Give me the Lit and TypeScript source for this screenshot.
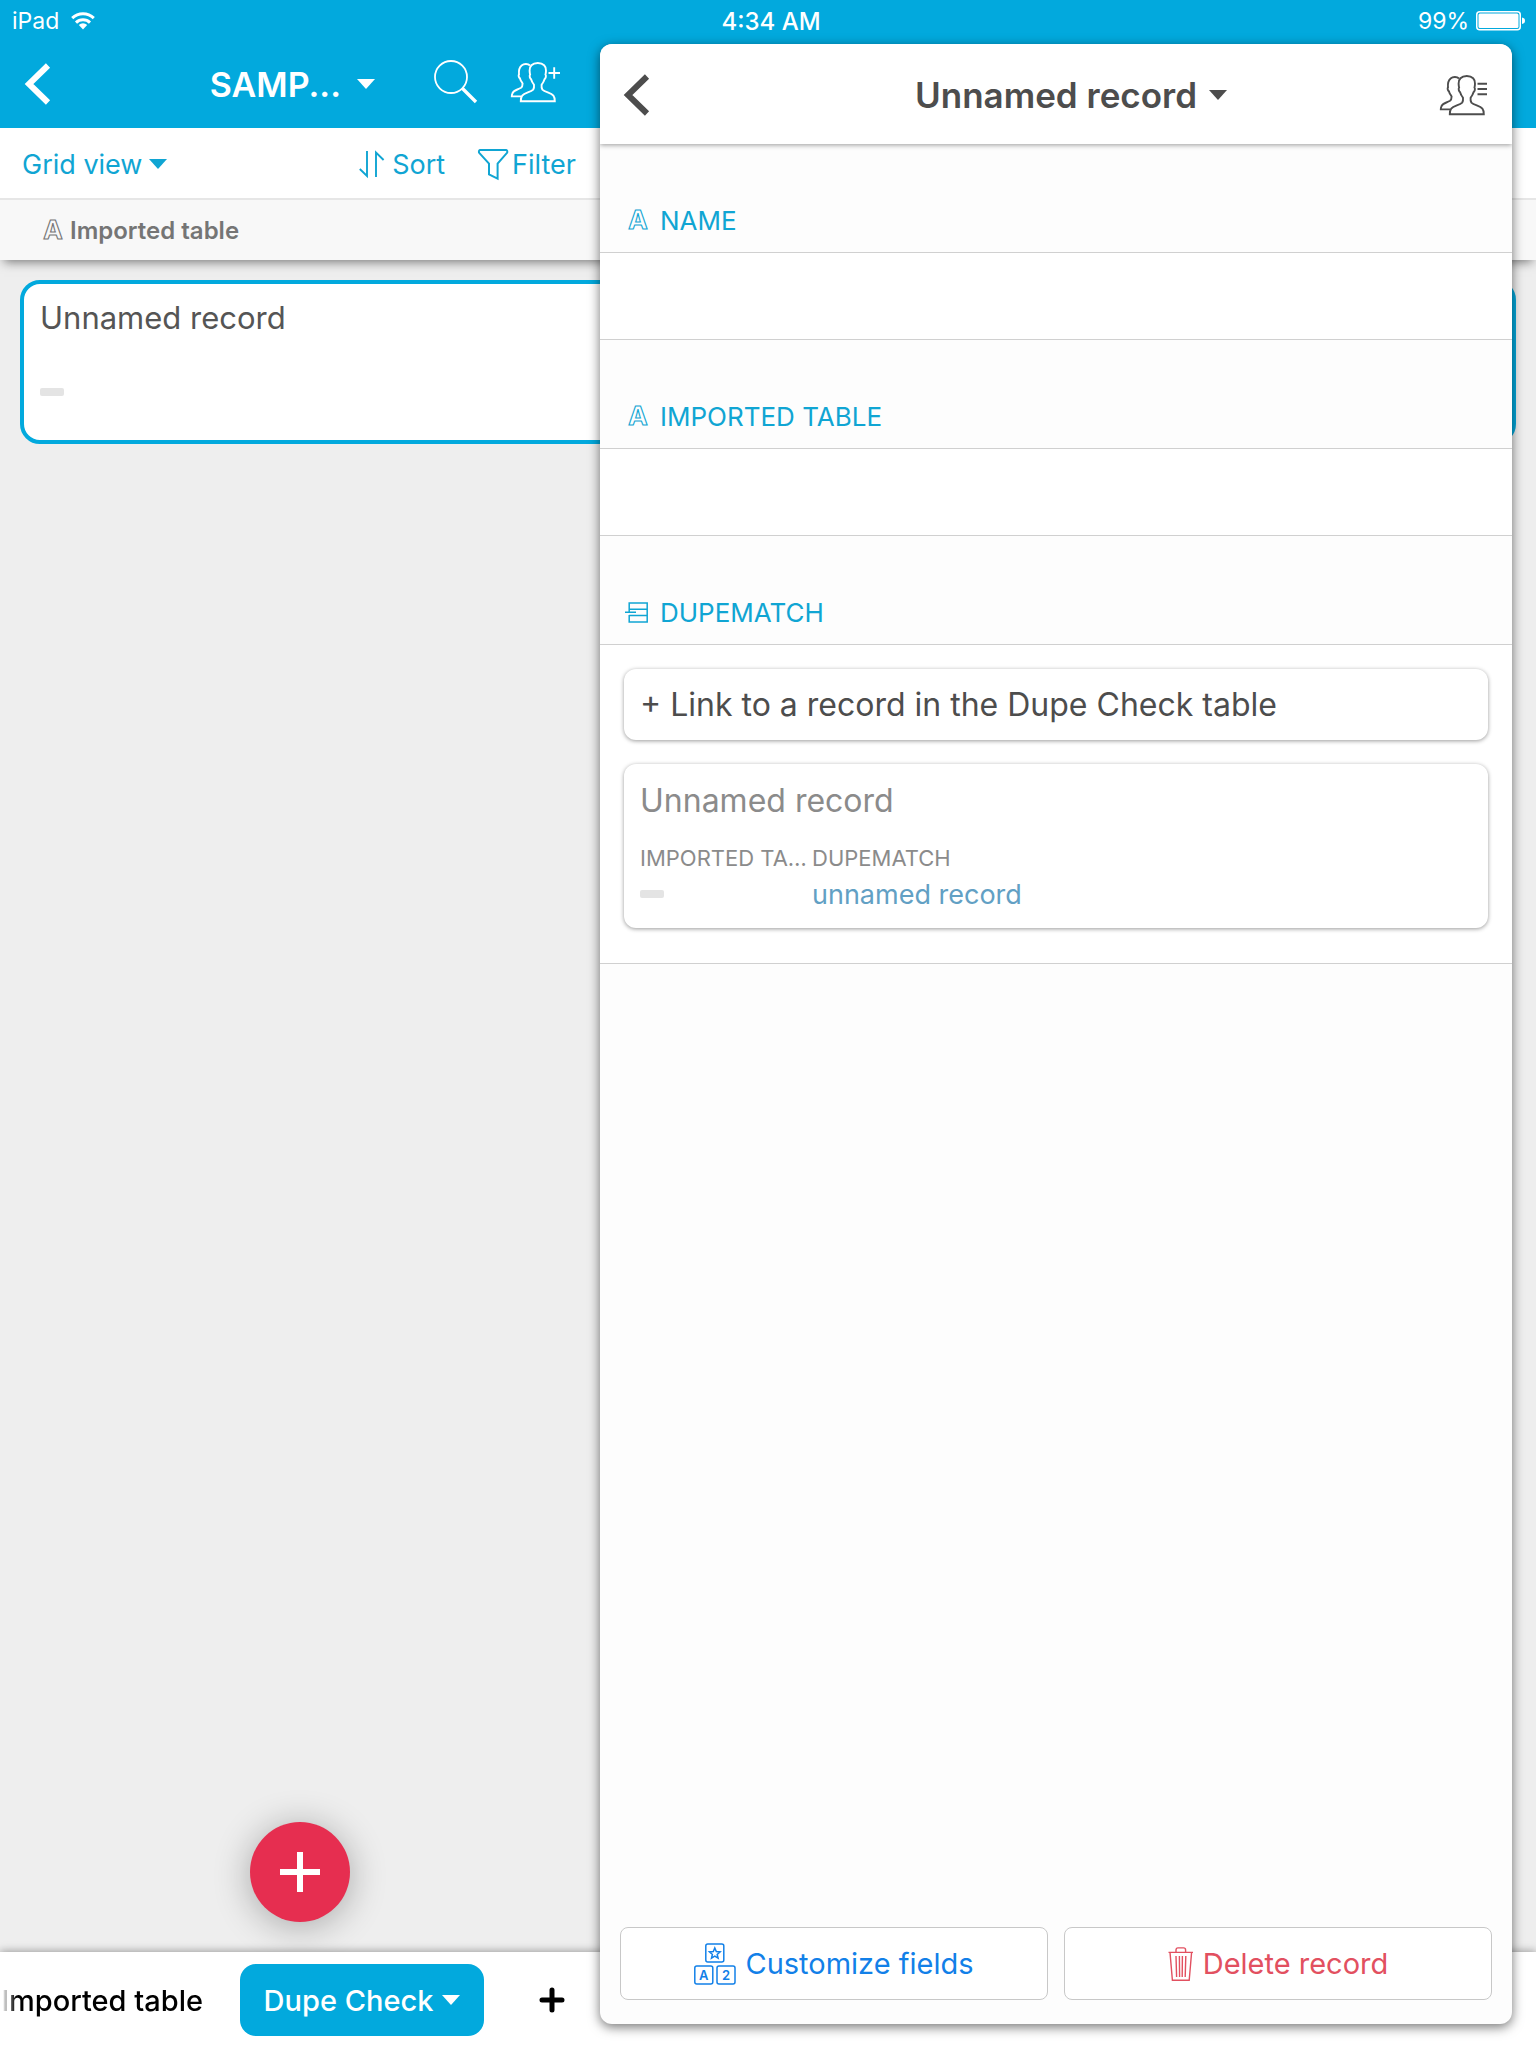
import { LitElement, html, css, svg, nothing } from "lit";
import { customElement, property } from "lit/decorators.js";

const personPair = svg`
  <path d="M19 3.5 C17 1.6 13 1.4 10.6 3.4 C8 5.6 7.6 8.4 8 12.4 C7.2 13.4 7.8 15.6 9 16.4 C9.6 18.6 10.8 20 11.6 21.4 C11.6 23.4 11.6 24.6 10 25.8 C6.6 28 2.6 27.8 1.4 31.4 C1 32.4 .8 33.4 .8 34.4 H10"/>
  <path d="M26.8 1 C21 1 18.4 4.4 18.6 8.6 C18.7 10.4 18.8 11.6 19.1 12.6 C18.2 13.6 18.8 16.6 20.2 17.4 C20.8 19.6 22 21.4 23 22.8 C23.2 24.6 23.2 26.2 22.2 27.6 C19.4 30.4 13.6 30.6 11.2 33.6 C9.8 35.4 9.8 37.4 9.8 39.2 H43.8 C43.8 37.4 43.8 35.4 42.4 33.6 C40 30.6 34.2 30.4 31.4 27.6 C30.4 26.2 30.4 24.6 30.6 22.8 C31.6 21.4 32.8 19.6 33.4 17.4 C34.8 16.6 35.4 13.6 34.5 12.6 C34.8 11.6 34.9 10.4 35 8.6 C35.2 4.4 32.6 1 26.8 1 Z"/>`;

const icons = {
  wifi: { w: 24, h: 18, body: svg`<g fill="none" stroke="currentColor" stroke-width="3"><path d="M1.2 6.2 A15.6 15.6 0 0 1 22.8 6.2"/><path d="M5 10.6 A10 10 0 0 1 19 10.6"/></g><path fill="currentColor" d="M7.8 13 A6 6 0 0 1 16.2 13 L12 17.6 Z"/>` },
  battery: { w: 50, h: 20, body: svg`<rect x=".75" y=".75" width="43.5" height="18" rx="3" fill="none" stroke="currentColor" stroke-width="1.5"/><rect x="2.5" y="2.5" width="40" height="14.5" rx="1.5" fill="currentColor"/><path fill="currentColor" d="M46 6.5 Q49 7 49 9.75 Q49 12.5 46 13 Z"/>` },
  back: { w: 26, h: 42, body: svg`<path d="M23 2.5 L4 21 L23 39.5" fill="none" stroke="currentColor" stroke-width="6"/>` },
  caret: { w: 18, h: 10, body: svg`<path d="M0 0 H18 L9 10 Z" fill="currentColor"/>` },
  search: { w: 44, h: 44, body: svg`<circle cx="17" cy="17" r="16" fill="none" stroke="currentColor" stroke-width="1.8"/><path d="M28.5 28.5 L42 42" stroke="currentColor" stroke-width="3.4"/>` },
  invite: { w: 50, h: 40, body: svg`<g fill="none" stroke="currentColor" stroke-width="1.9">${personPair}<path d="M37.5 11 H49 M43.2 5.2 V16.8"/></g>` },
  members: { w: 48, h: 40, body: svg`<g fill="none" stroke="currentColor" stroke-width="1.9">${personPair}<path d="M37.5 8.8 H47 M37.5 14 H47 M37.5 19.2 H47"/></g>` },
  sort: { w: 26, h: 28, body: svg`<path d="M8 1 V26 L.8 19 M17 27 V2.5 L24.6 10" fill="none" stroke="currentColor" stroke-width="1.9"/>` },
  filter: { w: 30, h: 31, body: svg`<path d="M2 1 H28.2 Q29.6 1.2 29.2 3.6 L19.6 14.6 V29.6 L11 25.4 V14.6 L1 3.6 Q.6 1.2 2 1 Z" fill="none" stroke="currentColor" stroke-width="2"/>` },
  text: { w: 24, h: 24, body: svg`<text x="14" y="21" font-family="Inter, sans-serif" font-size="26" font-weight="700" text-anchor="middle" fill="none" stroke="currentColor" stroke-width="1.1">A</text>` },
  link: { w: 24, h: 24, body: svg`<path d="M5.2 12.2 V3 H23.2 V22 H5.2 V15 M5.2 9.2 H23.2 M5.2 15.6 H23.2 M1 12.2 H12" fill="none" stroke="currentColor" stroke-width="1.5"/>` },
  blocks: { w: 42, h: 42, body: svg`<g fill="none" stroke="currentColor" stroke-width="1.5"><rect x="11.8" y="1" width="18" height="18" rx="2"/><rect x=".8" y="23" width="18" height="18" rx="2"/><rect x="23" y="23" width="18" height="18" rx="2"/><path d="M20.8 5 L22.3 8.6 L26.1 8.9 L23.2 11.4 L24.1 15.1 L20.8 13.1 L17.5 15.1 L18.4 11.4 L15.5 8.9 L19.3 8.6 Z"/></g><g fill="currentColor" font-family="Inter, sans-serif" font-size="13" font-weight="600" text-anchor="middle"><text x="9.8" y="36.8">A</text><text x="32" y="36.8">2</text></g>` },
  trash: { w: 26, h: 34, body: svg`<path d="M.5 5.4 H25 M8 5.4 V3 Q8 .9 10 .9 H15.6 Q17.6 .9 17.6 3 V5.4 M2 5.4 L4.4 33.2 H21.2 L23.6 5.4 M8 9 L8.6 30 M11.4 9 L11.6 30 M14.4 9 L14.2 30 M17.8 9 L17.2 30" fill="none" stroke="currentColor" stroke-width="1.4"/>` },
  plus: { w: 40, h: 40, body: svg`<path d="M0 20 H40 M20 0 V40" stroke="currentColor" stroke-width="6"/>` },
  plusSmall: { w: 24, h: 24, body: svg`<path d="M2 12 H22 M12 2 V22" stroke="currentColor" stroke-width="5" stroke-linecap="round"/>` },
};
type IconName = keyof typeof icons;

const icon = (name: IconName) => {
  const { w, h, body } = icons[name];
  return html`<svg class="icon" width=${w} height=${h} viewBox="0 0 ${w} ${h}" aria-hidden="true">${body}</svg>`;
};

const base = css`
  *, *::before, *::after { box-sizing: border-box; }
  button, input {
    font: inherit;
    color: inherit;
    margin: 0;
    padding: 0;
    border: 0;
    background: none;
  }
  button { display: flex; align-items: center; cursor: pointer; white-space: nowrap; }
  .icon { display: block; flex: none; overflow: visible; }
  .dash { width: 24px; height: 8px; border-radius: 2px; background: #e4e4e4; }
`;

@customElement("field-section")
class FieldSection extends LitElement {
  @property() label = "";
  @property() icon: IconName = "text";
  @property({ type: Boolean }) editable = false;

  static styles = [base, css`
    :host { display: block; }
    .head {
      display: flex;
      align-items: flex-end;
      gap: 12px;
      height: 109px;
      padding: 0 24px 15px;
      border-bottom: 1px solid #d0d0d0;
      background: #fdfdfd;
      color: #10a5d3;
      font-size: 26px;
      line-height: 32px;
      text-transform: uppercase;
    }
    .head .icon { margin-bottom: 5px; }
    .body { border-bottom: 1px solid #d0d0d0; background: #fff; }
    .value { display: block; width: 100%; height: 86px; padding: 0 42px; font-size: 32px; outline: none; }
  `];

  render() {
    return html`
      <div class="head">${icon(this.icon)}<label for=${this.editable ? "value" : nothing}>${this.label}</label></div>
      <div class="body">
        ${this.editable ? html`<input class="value" id="value" type="text">` : html`<slot></slot>`}
      </div>`;
  }
}

@customElement("record-panel")
class RecordPanel extends LitElement {
  static styles = [base, css`
    :host {
      display: flex;
      flex-direction: column;
      overflow: hidden;
      border-radius: 12px;
      background: #fdfdfd;
      box-shadow: 0 3px 12px rgba(0, 0, 0, .55);
      color: #4d4d4d;
    }
    .header {
      display: grid;
      grid-template-columns: 1fr auto 1fr;
      align-items: center;
      height: 100px;
      padding: 2px 24px 0;
      background: #fff;
      box-shadow: 0 1px 5px rgba(0, 0, 0, .4);
      z-index: 1;
    }
    .title { gap: 12px; padding-left: 30px; font-size: 35px; line-height: 44px; font-weight: 600; }
    .members { justify-self: end; }
    .links { display: flex; flex-direction: column; gap: 24px; padding: 24px 24px 35px; }
    .card {
      border-radius: 12px;
      background: #fff;
      box-shadow: 0 1px 4px rgba(0, 0, 0, .4);
      padding: 0 16px;
    }
    .add { height: 71px; width: 100%; font-size: 32px; }
    .linked { height: 164px; padding-top: 15px; color: #8b8b8b; }
    .name { font-size: 32px; line-height: 44px; }
    .cells { display: grid; grid-template-columns: 168px 1fr; column-gap: 4px; margin-top: 19px; }
    .cell { min-width: 0; }
    .caption { font-size: 22px; line-height: 32px; text-transform: uppercase; overflow: hidden; text-overflow: ellipsis; white-space: nowrap; }
    .cell-value { display: flex; align-items: center; height: 40px; font-size: 27px; }
    .cell-value a { color: #62a0c4; text-decoration: none; }
    .actions { display: grid; grid-template-columns: 1fr 1fr; gap: 16px; margin-top: auto; padding: 0 20px 24px; }
    .action {
      justify-content: center;
      gap: 9px;
      height: 73px;
      border: 1px solid #c8c8c8;
      border-radius: 8px;
      background: #fff;
      font-size: 29px;
      color: #1280e8;
    }
    .danger { color: #e25060; }
  `];

  render() {
    return html`
      <header class="header">
        <button aria-label="Back">${icon("back")}</button>
        <button class="title">Unnamed record ${icon("caret")}</button>
        <button class="members" aria-label="Members">${icon("members")}</button>
      </header>
      <field-section label="Name" editable></field-section>
      <field-section label="Imported table" editable></field-section>
      <field-section label="Dupematch" icon="link">
        <div class="links">
          <button class="card add">+ Link to a record in the Dupe Check table</button>
          <article class="card linked">
            <div class="name">Unnamed record</div>
            <div class="cells">
              <div class="cell">
                <div class="caption">Imported table</div>
                <div class="cell-value"><span class="dash"></span></div>
              </div>
              <div class="cell">
                <div class="caption">Dupematch</div>
                <div class="cell-value"><a href="#record">unnamed record</a></div>
              </div>
            </div>
          </article>
        </div>
      </field-section>
      <footer class="actions">
        <button class="action">${icon("blocks")}Customize fields</button>
        <button class="action danger">${icon("trash")}Delete record</button>
      </footer>`;
  }
}

@customElement("app-root")
class AppRoot extends LitElement {
  static styles = [base, css`
    :host {
      --brand: #02a9dd;
      --master: 600px;
      display: flex;
      flex-direction: column;
      position: relative;
      min-height: 100vh;
      overflow: hidden;
      background: #eee;
      font-family: Inter, "Liberation Sans", sans-serif;
    }
    .status {
      display: grid;
      grid-template-columns: 1fr auto 1fr;
      align-items: center;
      height: 44px;
      padding: 0 10px 2px 12px;
      background: var(--brand);
      color: #fff;
      font-size: 23px;
    }
    .device { display: flex; align-items: center; gap: 12px; }
    .clock { padding-left: 4px; font-size: 24px; font-weight: 500; }
    .power { display: flex; align-items: center; justify-content: flex-end; gap: 7px; }
    .topbar { height: 84px; background: var(--brand); color: #fff; }
    .nav {
      display: flex;
      align-items: center;
      width: var(--master);
      height: 80px;
      padding: 0 39px 0 25px;
    }
    .title { gap: 16px; margin: 0 59px 0 auto; font-size: 34px; font-weight: 600; }
    .tools { display: flex; align-items: center; gap: 33px; padding-bottom: 4px; }
    .toolbar {
      position: relative;
      z-index: 1;
      height: 72px;
      background: #fff;
      border-bottom: 2px solid #e6e6e6;
      color: #10a5d3;
      font-size: 27px;
    }
    .views {
      display: flex;
      align-items: center;
      width: var(--master);
      height: 100%;
      padding: 2px 24px 0 22px;
    }
    .view { gap: 7px; margin-right: auto; }
    .views .tool { gap: 7px; margin-left: 33px; }
    .views .filter { gap: 4px; }
    .columns {
      display: flex;
      align-items: center;
      gap: 7px;
      height: 60px;
      padding: 0 39px;
      background: #f8f8f8;
      box-shadow: 0 6px 10px -4px rgba(0, 0, 0, .5);
      color: #757575;
      font-size: 24px;
      font-weight: 600;
    }
    .content { position: relative; flex: 1; padding: 20px; }
    .record {
      height: 164px;
      border: 4px solid var(--brand);
      border-radius: 20px;
      background: #fff;
      padding: 12px 16px;
      color: #555;
      font-size: 31px;
      line-height: 44px;
    }
    .record .dash { margin-top: 48px; }
    .add {
      position: absolute;
      left: calc(var(--master) / 2 - 50px);
      bottom: 30px;
      justify-content: center;
      width: 100px;
      height: 100px;
      border-radius: 50%;
      background: #e62e50;
      color: #fff;
      box-shadow: 0 4px 36px rgba(0, 0, 0, .3);
    }
    .tabs {
      display: flex;
      align-items: center;
      height: 96px;
      background: #fff;
      box-shadow: 0 -1px 8px rgba(0, 0, 0, .35);
      z-index: 1;
      font-size: 29px;
      font-weight: 500;
    }
    .scrolled {
      justify-content: flex-end;
      width: 240px;
      padding-right: 37px;
      overflow: hidden;
      mask-image: linear-gradient(to right, transparent 2px, #000 16px);
    }
    .current {
      justify-content: center;
      gap: 9px;
      width: 244px;
      height: 72px;
      border-radius: 16px;
      background: var(--brand);
      color: #fff;
    }
    .new { margin-left: 56px; }
    .panel { position: absolute; inset: 44px 24px 24px var(--master); z-index: 2; }
  `];

  render() {
    return html`
      <div class="status">
        <div class="device">iPad ${icon("wifi")}</div>
        <div class="clock">4:34 AM</div>
        <div class="power">99% ${icon("battery")}</div>
      </div>
      <header class="topbar">
        <div class="nav">
          <button aria-label="Back">${icon("back")}</button>
          <button class="title">SAMP... ${icon("caret")}</button>
          <div class="tools">
            <button aria-label="Search">${icon("search")}</button>
            <button aria-label="Invite">${icon("invite")}</button>
          </div>
        </div>
      </header>
      <div class="toolbar">
        <div class="views">
          <button class="view">Grid view ${icon("caret")}</button>
          <button class="tool">${icon("sort")}Sort</button>
          <button class="tool filter">${icon("filter")}Filter</button>
        </div>
      </div>
      <div class="columns">${icon("text")}Imported table</div>
      <main class="content">
        <article class="record">
          <div>Unnamed record</div>
          <div class="dash"></div>
        </article>
        <button class="add" aria-label="Add record">${icon("plus")}</button>
      </main>
      <nav class="tabs">
        <button class="scrolled">Imported table</button>
        <button class="current">Dupe Check ${icon("caret")}</button>
        <button class="new" aria-label="Add table">${icon("plusSmall")}</button>
      </nav>
      <record-panel class="panel"></record-panel>`;
  }
}
